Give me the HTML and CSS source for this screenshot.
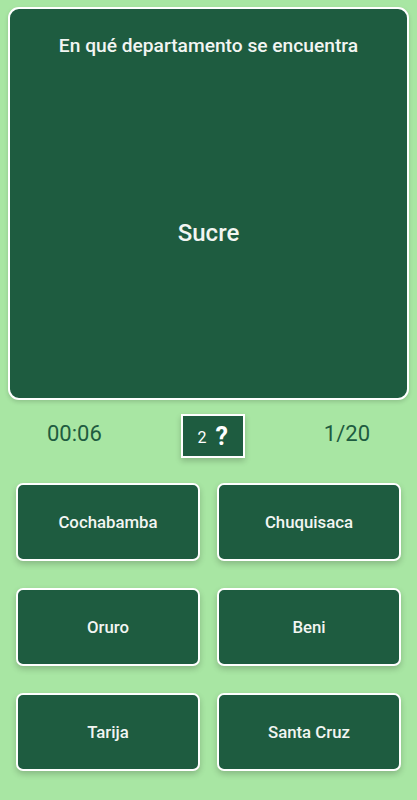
FILE: index.html
```html
<!DOCTYPE html>
<html lang="es">
<head>
<meta charset="utf-8">
<title>Quiz</title>
<link rel="stylesheet" href="styles.css">
</head>
<body>
<main class="screen">
  <section class="card">
    <h1 class="question">En qué departamento se encuentra</h1>
    <div class="subject">Sucre</div>
  </section>
  <div class="stats">
    <span class="timer">00:06</span>
    <div class="hint"><span class="hint-count">2</span><span class="hint-mark">?</span></div>
    <span class="counter">1/20</span>
  </div>
  <div class="answers">
    <button class="answer">Cochabamba</button>
    <button class="answer">Chuquisaca</button>
    <button class="answer">Oruro</button>
    <button class="answer">Beni</button>
    <button class="answer">Tarija</button>
    <button class="answer">Santa Cruz</button>
  </div>
</main>
</body>
</html>
```
FILE: styles.css
```css
html, body {
  margin: 0;
  padding: 0;
  background: #a8e6a3;
  font-family: Roboto, "Liberation Sans", sans-serif;
}
.screen {
  width: 417px;
  height: 800px;
  box-sizing: border-box;
  padding: 7px 8px 0;
  display: flex;
  flex-direction: column;
}
.card {
  height: 393px;
  box-sizing: border-box;
  background: #1e5c40;
  border: 2px solid #ffffff;
  border-radius: 11px;
  display: flex;
  flex-direction: column;
  align-items: center;
  box-shadow: 0 2px 4px rgba(0,0,0,0.15);
}
.question {
  margin: 25px 0 0;
  font-size: 19.2px;
  font-weight: 500;
  color: #f2f5f2;
  line-height: 24px;
}
.subject {
  margin-top: 160px;
  font-size: 24px;
  font-weight: 500;
  color: #f2f5f2;
  line-height: 30px;
}
.stats {
  margin-top: 14px;
  padding: 0 39px;
  display: flex;
  justify-content: space-between;
  align-items: center;
  height: 44px;
}
.timer, .counter {
  font-size: 22px;
  color: #1e5c40;
  line-height: 24px;
  padding-bottom: 5px;
}
.hint {
  width: 64px;
  height: 44px;
  box-sizing: border-box;
  background: #1e5c40;
  border: 2px solid #ffffff;
  display: flex;
  align-items: center;
  justify-content: center;
  gap: 9px;
  color: #ffffff;
  box-shadow: 0 3px 6px rgba(0,0,0,0.2);
}
.hint-count {
  font-size: 16px;
  padding-top: 3px;
}
.hint-mark {
  font-size: 25px;
  font-weight: 700;
}
.answers {
  margin-top: 25px;
  padding: 0 8px;
  display: grid;
  grid-template-columns: 1fr 1fr;
  grid-auto-rows: 78px;
  column-gap: 17px;
  row-gap: 27px;
}
.answer {
  background: #1e5c40;
  border: 2px solid #ffffff;
  border-radius: 7px;
  color: #f2f5f2;
  font-family: Roboto, "Liberation Sans", sans-serif;
  font-size: 16.8px;
  font-weight: 500;
  box-shadow: 0 3px 6px rgba(0,0,0,0.2);
  padding: 0;
}
```
